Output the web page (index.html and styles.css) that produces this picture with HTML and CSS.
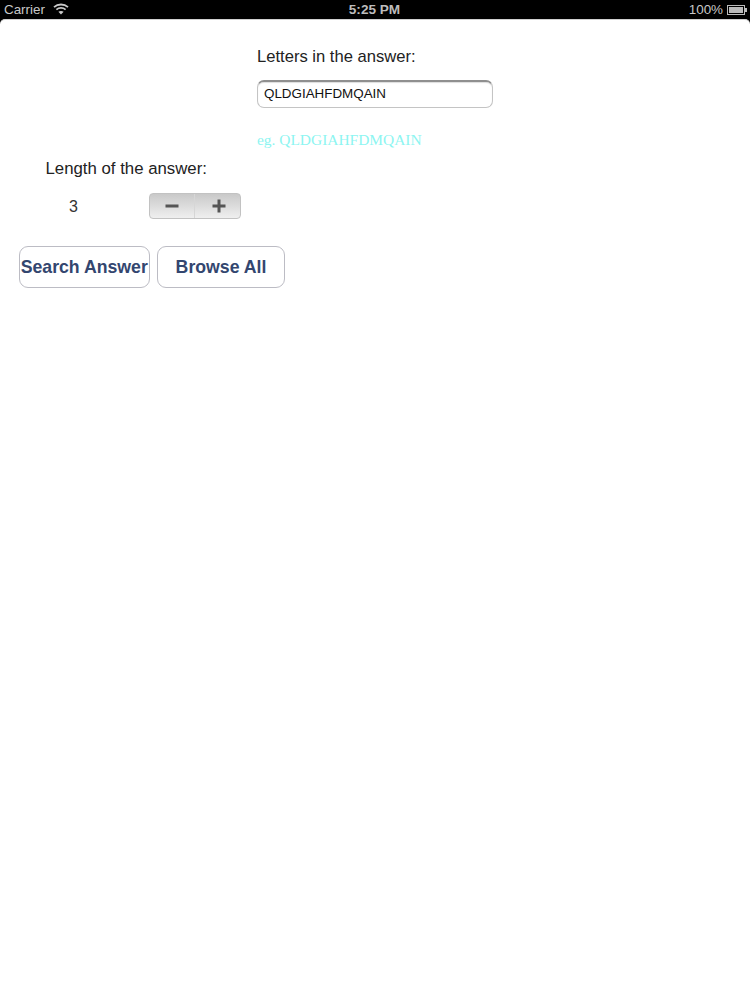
FILE: index.html
```html
<!DOCTYPE html>
<html lang="en">
<head>
<meta charset="utf-8">
<title>Search Answer</title>
<link rel="stylesheet" href="styles.css">
</head>
<body>
<div class="screen">
  <header class="status">
    <div class="status-left">
      <span>Carrier</span>
      <svg class="wifi" width="16" height="12" viewBox="0 0 16 12" aria-hidden="true">
        <path d="M1 4.2C5 .6 11 .6 15 4.2" fill="none" stroke="#c9c9c9" stroke-width="1.8"/>
        <path d="M3.4 6.6C6 4.4 10 4.4 12.6 6.6" fill="none" stroke="#c9c9c9" stroke-width="1.8"/>
        <path d="M8 11.6 5.4 8.8C6.9 7.7 9.1 7.7 10.6 8.8Z" fill="#c9c9c9"/>
      </svg>
    </div>
    <div class="status-time">5:25 PM</div>
    <div class="status-right">
      <span>100%</span>
      <span class="battery"><span class="battery-fill"></span></span>
    </div>
  </header>
  <main class="content">
    <section class="letters">
      <label class="label">Letters in the answer:</label>
      <div class="field">QLDGIAHFDMQAIN</div>
      <p class="hint">eg. QLDGIAHFDMQAIN</p>
    </section>
    <section class="length">
      <label class="label label-length">Length of the answer:</label>
      <div class="length-row">
        <span class="value">3</span>
        <div class="stepper">
          <span class="step step-minus">
            <svg width="14" height="14" viewBox="0 0 14 14" aria-hidden="true"><rect x="0.5" y="5.5" width="13" height="3" fill="#555"/></svg>
          </span>
          <span class="step step-plus">
            <svg width="14" height="14" viewBox="0 0 14 14" aria-hidden="true"><path d="M0.5 5.5H5.5V0.5H8.5V5.5H13.5V8.5H8.5V13.5H5.5V8.5H0.5Z" fill="#555"/></svg>
          </span>
        </div>
      </div>
    </section>
    <div class="actions">
      <button class="btn btn-search">Search Answer</button>
      <button class="btn btn-browse">Browse All</button>
    </div>
  </main>
</div>
</body>
</html>
```
FILE: styles.css
```css
* { box-sizing: border-box; }
html, body { margin: 0; padding: 0; height: 100%; background: #000; }
body { font-family: "Liberation Sans", Arial, sans-serif; overflow: hidden; }
.screen { width: 750px; height: 1000px; display: flex; flex-direction: column; background: #000; }
.status {
  height: 19px;
  flex: none;
  display: grid;
  grid-template-columns: 1fr auto 1fr;
  align-items: center;
  padding: 0 3px 0 4px;
  color: #c8c8c8;
  font-size: 13.4px;
  font-weight: 400;
  background: #000;
}
.status-left { display: flex; align-items: center; gap: 8px; }
.wifi { display: block; margin-top: -2px; }
.status-time { font-weight: 700; font-size: 13.6px; color: #bdbdbd; padding-right: 2px; }
.status-right { display: flex; justify-content: flex-end; align-items: center; gap: 4px; }
.battery { width: 18px; height: 10px; border: 1px solid #bbb; padding: 1px; display: block; position: relative; margin-right: 2px; }
.battery::after { content: ""; position: absolute; right: -3px; top: 2px; width: 2px; height: 4px; background: #bbb; }
.battery-fill { display: block; height: 100%; background: #bbb; }
.content {
  flex: 1;
  background: #fff;
  border-radius: 5px 5px 0 0;
  border-top: 1px solid #d0d0d0;
  padding-top: 28px;
}
.label { display: block; font-size: 16.6px; line-height: 18px; color: #222; }
.label-length { font-size: 16.8px; }
.letters { margin-left: 257px; width: 236px; }
.field {
  margin-top: 14px;
  height: 28px;
  border: 1px solid #c4c4c4;
  border-top: 2px solid #8f8f8f;
  border-radius: 7px;
  box-shadow: inset 0 1px 1px #ddd;
  padding-left: 6px;
  font-size: 13.4px;
  line-height: 24px;
  color: #111;
  background: #fff;
}
.hint {
  margin: 22px 0 0;
  font-family: "Liberation Serif", "Times New Roman", serif;
  font-size: 15.45px;
  line-height: 20px;
  color: #8df5f1;
  white-space: nowrap;
}
.length { margin-top: 10px; margin-left: 45.5px; }
.length-row { margin-top: 15px; display: flex; align-items: center; }
.value { width: 103.5px; padding: 1px 0 0 23.5px; font-size: 16px; line-height: 18px; color: #333; }
.stepper {
  width: 92px;
  height: 26px;
  display: flex;
  border: 1px solid #c2c2c2;
  border-radius: 4px;
  background: linear-gradient(#c9c9c9, #efefef);
}
.step { flex: 1; display: flex; align-items: center; justify-content: center; }
.step-minus { border-right: 1px solid #d6d6d6; padding-right: 1px; }
.step-plus { padding-left: 2px; }
.actions { margin: 27px 0 0 19px; display: flex; gap: 7.5px; }
.btn {
  height: 42px;
  padding: 0;
  background: #fff;
  border: 1px solid #bcbcc4;
  border-radius: 9px;
  color: #33466f;
  font-family: "Liberation Sans", Arial, sans-serif;
  font-weight: 700;
  font-size: 17.7px;
  white-space: nowrap;
}
.btn-search { width: 130.5px; }
.btn-browse { width: 128px; }
```
